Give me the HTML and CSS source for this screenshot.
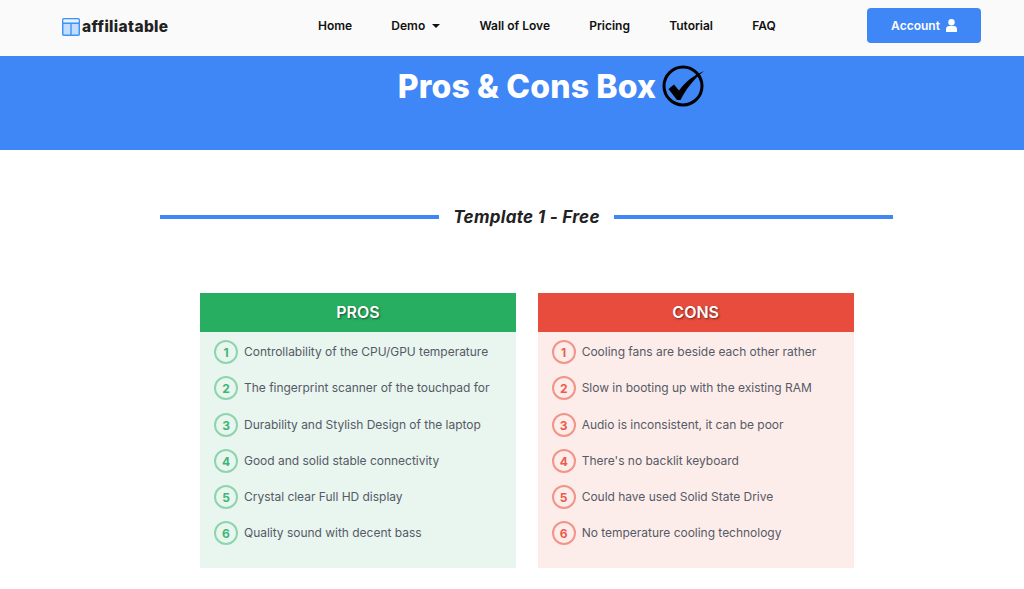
FILE: index.html
```html
<!DOCTYPE html>
<html lang="en">
<head>
  <meta charset="UTF-8">
  <meta name="viewport" content="width=device-width, initial-scale=1.0">
  <title>Pros &amp; Cons Box</title>
  <link rel="stylesheet" href="styles.css">
</head>
<body>
  <header class="navbar">
    <a class="logo" href="#">
      <svg class="logo-icon" width="18" height="18" viewBox="0 0 18 18">
        <rect x="0.75" y="0.75" width="16.5" height="16.5" rx="1" fill="#c4dcfd" stroke="#3f95f7" stroke-width="1.5"/>
        <rect x="1.5" y="1.5" width="15" height="3" fill="#eaf3fe"/>
        <path d="M1 5.2 H17 M9 5.2 V17" fill="none" stroke="#3f95f7" stroke-width="1.4"/>
      </svg>
      <span>affiliatable</span>
    </a>
    <nav class="nav-links">
      <a href="#">Home</a>
      <a href="#">Demo <span class="caret"></span></a>
      <a href="#">Wall of Love</a>
      <a href="#">Pricing</a>
      <a href="#">Tutorial</a>
      <a href="#">FAQ</a>
    </nav>
    <a class="account-btn" href="#">
      Account
      <svg width="11" height="13" viewBox="0 0 11 13">
        <circle cx="5.5" cy="3.2" r="3.2" fill="#fff"/>
        <path d="M0 13 V10.2 C0 8.2 1.4 7 3 7 H8 C9.6 7 11 8.2 11 10.2 V13 Z" fill="#fff"/>
      </svg>
    </a>
  </header>

  <section class="hero">
    <h1>Pros &amp; Cons Box</h1>
    <svg class="hero-check" width="44" height="44" viewBox="0 0 44 44">
      <circle cx="21" cy="22" r="19" fill="none" stroke="#000" stroke-width="3"/>
      <path d="M6.5 25 L12 20.5 L17 26.5 C23 18 32 11 42 7 C32 15 24 25 18.5 36 L15 36 Z" fill="#000"/>
    </svg>
  </section>

  <main class="content">
    <div class="template-title">
      <span class="line"></span>
      <h2>Template 1 - Free</h2>
      <span class="line"></span>
    </div>

    <div class="boxes">
      <div class="box pros">
        <h3>PROS</h3>
        <ol>
          <li><span class="num">1</span>Controllability of the CPU/GPU temperature</li>
          <li><span class="num">2</span>The fingerprint scanner of the touchpad for</li>
          <li><span class="num">3</span>Durability and Stylish Design of the laptop</li>
          <li><span class="num">4</span>Good and solid stable connectivity</li>
          <li><span class="num">5</span>Crystal clear Full HD display</li>
          <li><span class="num">6</span>Quality sound with decent bass</li>
        </ol>
      </div>
      <div class="box cons">
        <h3>CONS</h3>
        <ol>
          <li><span class="num">1</span>Cooling fans are beside each other rather</li>
          <li><span class="num">2</span>Slow in booting up with the existing RAM</li>
          <li><span class="num">3</span>Audio is inconsistent, it can be poor</li>
          <li><span class="num">4</span>There's no backlit keyboard</li>
          <li><span class="num">5</span>Could have used Solid State Drive</li>
          <li><span class="num">6</span>No temperature cooling technology</li>
        </ol>
      </div>
    </div>
  </main>
</body>
</html>
```
FILE: styles.css
```css
html, body {
  height: 100%;
}

body {
  margin: 0;
  overflow: hidden;
  font-family: 'Inter', sans-serif;
  background: white;
  color: #333;
}

a {
  text-decoration: none;
}

.navbar {
  display: flex;
  align-items: center;
  height: 56px;
  padding: 0 43px 6px 62px;
  box-sizing: border-box;
  background-color: #fafafa;
}

.logo {
  display: flex;
  align-items: center;
  gap: 2px;
  width: 256px;
  margin-top: 3px;
  font-size: 15.5px;
  font-weight: 800;
  letter-spacing: 0.35px;
  color: #222;
}

.logo-icon {
  flex: none;
}

.nav-links {
  display: flex;
  gap: 39.2px;
  flex: 1;
}

.nav-links a {
  font-size: 12px;
  font-weight: 600;
  color: #111;
}

.caret {
  display: inline-block;
  margin-left: 4px;
  vertical-align: 2px;
  border-left: 4px solid transparent;
  border-right: 4px solid transparent;
  border-top: 4px solid #111;
}

.account-btn {
  display: flex;
  align-items: center;
  justify-content: center;
  gap: 6px;
  width: 114px;
  height: 35px;
  border-radius: 4px;
  background-color: #3f86f7;
  color: white;
  font-size: 12px;
  font-weight: 600;
}

.hero {
  display: flex;
  align-items: flex-start;
  justify-content: center;
  gap: 6px;
  height: 94px;
  padding-left: 80px;
  box-sizing: border-box;
  width: 1024px;
  background-color: #3f86f7;
}

.hero h1 {
  margin: 11px 0 0;
  font-size: 32px;
  line-height: 40px;
  font-weight: 800;
  letter-spacing: 0.15px;
  color: white;
}

.hero-check {
  margin-top: 8px;
}

.content {
  width: 733px;
  margin-left: 160px;
}

.template-title {
  display: flex;
  align-items: center;
  gap: 14px;
  margin-top: 55px;
}

.template-title .line {
  flex: 1;
  height: 4px;
  background-color: #3f86f7;
}

.template-title h2 {
  margin: 0;
  font-size: 17px;
  line-height: 24px;
  font-style: italic;
  font-weight: 700;
  letter-spacing: 0.3px;
  color: #222;
}

.boxes {
  display: flex;
  gap: 21.7px;
  margin: 64px 0 0 40px;
}

.box {
  flex: none;
  width: 316px;
  height: 275px;
}

.box h3 {
  margin: 0;
  height: 39px;
  font-size: 16px;
  line-height: 39px;
  font-weight: 600;
  text-align: center;
  color: white;
  text-shadow: 1px 1px 2px rgba(0, 0, 0, 0.5);
}

.box ol {
  list-style: none;
  margin: 0;
  padding: 8px 14px 0;
}

.box li {
  display: flex;
  align-items: flex-start;
  gap: 6px;
  height: 36.3px;
  font-size: 12px;
  line-height: 24px;
  letter-spacing: -0.02px;
  color: #555a66;
}

.num {
  flex: none;
  width: 24px;
  height: 24px;
  box-sizing: border-box;
  border: 2px solid;
  border-radius: 50%;
  font-size: 12px;
  font-weight: 700;
  line-height: 22px;
  text-align: center;
}

.pros {
  background-color: #e9f5ef;
}

.pros h3 {
  background-color: #27ae60;
}

.pros .num {
  border-color: #8dd6ad;
  color: #3fb573;
}

.cons {
  background-color: #fdedea;
}

.cons h3 {
  background-color: #e74c3c;
}

.cons .num {
  border-color: #f29488;
  color: #ec5a4c;
}
```
